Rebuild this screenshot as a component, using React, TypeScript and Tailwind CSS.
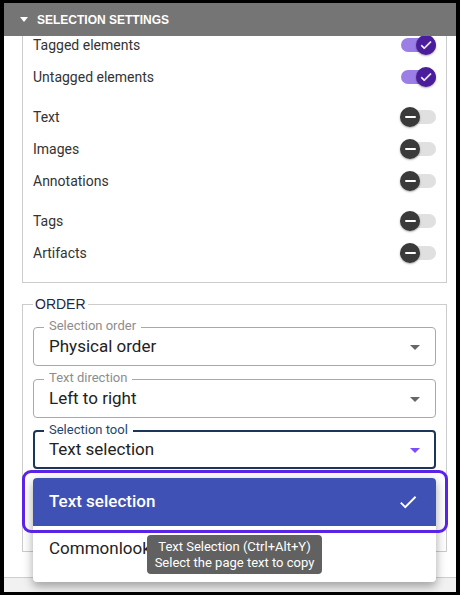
import React from 'react';

const body = { fontFamily: 'Roboto, "Liberation Sans", Arial, sans-serif' };
const arial = { fontFamily: '"Liberation Sans", Arial, sans-serif' };

const CheckPath = 'M9 16.17 4.83 12l-1.42 1.41L9 19 21 7l-1.41-1.41z';

const Toggle: React.FC<{ on: boolean }> = ({ on }) => (
  <div className="relative w-[36px] h-[20px] shrink-0">
    <div className={`absolute left-[1px] right-0 top-[3px] h-[14px] rounded-full ${on ? 'bg-[#9b7fe6]' : 'bg-[#e0e0e0]'}`} />
    <div
      className={`absolute top-0 w-[20px] h-[20px] rounded-full flex items-center justify-center shadow-[0_1px_2px_rgba(0,0,0,0.35)] ${
        on ? 'left-[16px] bg-[#4a1d9c]' : 'left-0 bg-[#3a3a3a]'
      }`}
    >
      {on ? (
        <svg width="14" height="14" viewBox="0 0 24 24" fill="white">
          <path d={CheckPath} stroke="white" strokeWidth="1" />
        </svg>
      ) : (
        <div className="w-[11px] h-[2px] bg-white rounded-full" />
      )}
    </div>
  </div>
);

const Row: React.FC<{ label: string; on?: boolean; gap?: boolean }> = ({ label, on = false, gap }) => (
  <div className={`h-[32px] flex items-center justify-between ${gap ? 'mt-[8px]' : ''}`}>
    <span className="text-[14px] text-[#333]">{label}</span>
    <Toggle on={on} />
  </div>
);

const Select: React.FC<{ label: string; value: string; focused?: boolean; className?: string }> = ({
  label,
  value,
  focused,
  className = '',
}) => (
  <div
    className={`relative h-[39px] rounded-[4px] flex items-center ${
      focused ? 'border-2 border-[#1b3658] pl-[14px]' : 'border border-[#a9a9a9] pl-[15px]'
    } ${className}`}
  >
    <span
      className={`absolute -top-[10px] px-[5px] bg-white text-[13px] leading-[16px] ${
        focused ? 'left-[9px] text-[#23466f]' : 'left-[10px] text-[#8d8d8d]'
      }`}
    >
      {label}
    </span>
    <span className="text-[17px] text-[#222]">{value}</span>
    <svg
      className={`absolute top-1/2 -translate-y-1/2 ${focused ? 'right-[7px]' : 'right-[8px]'}`}
      width="24"
      height="24"
      viewBox="0 0 24 24"
      fill={focused ? '#7c4dff' : '#666'}
    >
      <path d="M7 10l5 5 5-5z" />
    </svg>
  </div>
);

export default function App() {
  return (
    <div className="w-[460px] h-[595px] bg-black pt-[3px] pb-[3px] px-[4px]" style={body}>
      <div className="relative w-full h-full bg-white flex flex-col overflow-hidden">
        {/* expanded section header */}
        <div className="h-[33px] shrink-0 bg-[#757575] flex items-center pl-[16px] gap-[9px] z-10">
          <svg width="8" height="5" viewBox="0 0 8 5" fill="white">
            <path d="M0 0h8L4 5z" />
          </svg>
          <span className="text-white text-[12px] font-bold" style={arial}>
            SELECTION SETTINGS
          </span>
        </div>

        {/* scrolled content */}
        <div className="flex-1 overflow-hidden pl-[18px] pr-[9px]">
          <div className="-mt-[7px]">
            <div className="border-x border-b border-[#cccccc] px-[10px] pb-[13px]">
              <Row label="Tagged elements" on />
              <Row label="Untagged elements" on />
              <Row label="Text" gap />
              <Row label="Images" />
              <Row label="Annotations" />
              <Row label="Tags" gap />
              <Row label="Artifacts" />
            </div>

            <fieldset className="mt-[13px] border border-[#cccccc] px-[10px] h-[256px]">
              <legend className="ml-0 px-[2px] text-[14px] leading-[16px] text-[#1c2a45]" style={arial}>
                ORDER
              </legend>
              <Select className="mt-[15px]" label="Selection order" value="Physical order" />
              <Select className="mt-[13px]" label="Text direction" value="Left to right" />
              <Select className="mt-[12px]" label="Selection tool" value="Text selection" focused />
            </fieldset>
          </div>
        </div>

        {/* next collapsed section */}
        <div className="absolute left-0 right-0 top-[574px] h-[20px] border-t border-[#cfcfcf] bg-[#f1f1f1] flex items-start pl-[18px] gap-[8px] pt-[12px]">
          <span className="text-[10px] leading-[12px] text-[#666]">▸</span>
          <span className="text-[12px] leading-[14px] font-bold text-[#666]" style={arial}>
            ROLE MAPS
          </span>
        </div>

        {/* open dropdown menu */}
        <div className="absolute left-[29px] top-[475px] w-[403px] h-[104px] bg-white rounded-[4px] shadow-[0_5px_8px_rgba(0,0,0,0.25),0_1px_14px_rgba(0,0,0,0.12)] overflow-hidden z-20">
          <div className="h-[48px] bg-[#3f51b5] flex items-center justify-between pl-[16px] pr-[17px]">
            <span className="text-[17px] font-medium text-white">Text selection</span>
            <svg width="22" height="22" viewBox="0 0 24 24" fill="white">
              <path d={CheckPath} />
            </svg>
          </div>
          <div className="h-[46px] flex items-center pl-[16px]">
            <span className="text-[17px] text-[#222]">Commonlook selection</span>
          </div>
        </div>

        {/* keyboard focus ring around the selected option */}
        <div className="absolute left-[18px] top-[467px] w-[426px] h-[63px] border-[3px] border-[#5b22e8] rounded-[9px] z-30" />

        {/* tooltip */}
        <div className="absolute left-[143px] top-[532px] w-[175px] h-[39px] bg-[#616161] rounded-[4px] flex flex-col items-center justify-center text-white text-[13px] leading-[16px] z-40">
          <span>Text Selection (Ctrl+Alt+Y)</span>
          <span>Select the page text to copy</span>
        </div>
      </div>
    </div>
  );
}
